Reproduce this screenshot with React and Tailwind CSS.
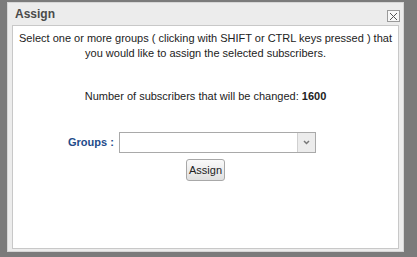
export default function App() {
  return (
    <div className="w-[417px] h-[257px] bg-[#7b7b7b] pt-[2px] pl-[7px]" style={{ fontFamily: '"Liberation Sans", Arial, sans-serif' }}>
      <div className="w-[397px] h-[250px] bg-[#ececec] border border-[#d6d6d6] flex flex-col px-[4px] pb-[2px]">
        <div className="h-[22px] flex items-center justify-between pl-[3px] pr-0">
          <span className="text-[12px] font-bold text-[#4a4a4a]">Assign</span>
          <div className="w-[13px] h-[12px] border border-[#9a9a9a] bg-[#f7f7f7] flex items-center justify-center mt-[4px] mr-[-1px]">
            <svg width="9" height="9" viewBox="0 0 9 9"><path d="M1 1L8 8M8 1L1 8" stroke="#555" strokeWidth="1" /></svg>
          </div>
        </div>
        <div className="flex-1 bg-white border border-[#c8c8c8] flex flex-col items-center text-[11px] text-[#222]">
          <p className="mt-[5px] text-center leading-[15px] whitespace-nowrap">
            Select one or more groups ( clicking with SHIFT or CTRL keys pressed ) that<br />you would like to assign the selected subscribers.
          </p>
          <p className="mt-[28px] leading-[15px] whitespace-nowrap">Number of subscribers that will be changed: <b>1600</b></p>
          <div className="mt-[28px] self-start ml-[55px] flex items-center">
            <span className="text-[11px] font-bold text-[#1e4b8a] w-[51px]">Groups :</span>
            <div className="w-[197px] h-[21px] border border-[#a9a9a9] flex">
              <div className="flex-1" />
              <div className="w-[18px] bg-[#ececec] border-l border-[#d0d0d0] flex items-center justify-center">
                <svg width="7" height="5" viewBox="0 0 7 5"><path d="M1 1L3.5 3.5L6 1" stroke="#777" strokeWidth="1.5" fill="none" /></svg>
              </div>
            </div>
          </div>
          <button className="mt-[6px] w-[39px] h-[22px] border border-[#a8a8a8] rounded-[3px] bg-gradient-to-b from-[#fafafa] to-[#e0e0e0] text-[11px] text-[#222]">Assign</button>
        </div>
      </div>
    </div>
  );
}
